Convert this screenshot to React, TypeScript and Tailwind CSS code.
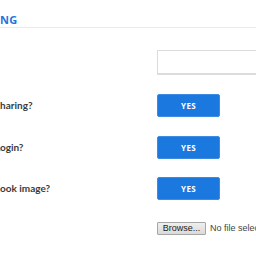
export default function App() {
  const rows = [
    { label: 'haring?', shift: 'ml-0' },
    { label: 'Login?', shift: '-ml-[5px]' },
    { label: 'ook image?', shift: 'ml-0' },
  ]

  return (
    <div className="w-[256px] h-[256px] overflow-hidden bg-white font-['Lato',sans-serif]">
      <div className="h-[28px] pt-[13px] border-b border-[#ebebeb]">
        <span className="block font-['Open_Sans',sans-serif] text-[11px] leading-[14px] font-bold tracking-[0.2px] text-[#1f74e0]">
          NG
        </span>
      </div>

      <div className="flex flex-col w-[320px]">
        <div className="flex mt-[22px] h-[25px]">
          <div className="w-[157px] shrink-0" />
          <input
            type="text"
            className="w-[160px] h-[25px] border border-[#dcdcdc] border-b-2 bg-white outline-none"
          />
        </div>

        {rows.map((row, i) => (
          <div
            key={row.label}
            className={`flex items-center h-[23px] ${i === 2 ? 'mt-[18px]' : 'mt-[19px]'}`}
          >
            <div className="w-[157px] shrink-0 overflow-hidden">
              <span
                className={`block whitespace-nowrap text-[10px] font-bold text-[#3a3a3a] ${row.shift}`}
              >
                {row.label}
              </span>
            </div>
            <button className="w-[63px] h-[23px] rounded-[2px] bg-[#1b78de] border border-[#3e8ce2] text-white font-['Open_Sans',sans-serif] text-[8px] font-bold tracking-[0.3px] leading-none">
              YES
            </button>
          </div>
        ))}

        <div className="flex items-center mt-[22px] h-[13px]">
          <div className="w-[157px] shrink-0" />
          <button className="h-[13px] w-[49px] bg-gradient-to-b from-[#efefef] to-[#dadada] border border-[#a6a6a6] rounded-[1px] font-['Liberation_Sans',sans-serif] text-[9px] leading-[11px] text-[#222]">
            Browse...
          </button>
          <span className="ml-[4px] whitespace-nowrap font-['Liberation_Sans',sans-serif] text-[9px] text-[#444]">
            No file selected.
          </span>
        </div>
      </div>
    </div>
  )
}
